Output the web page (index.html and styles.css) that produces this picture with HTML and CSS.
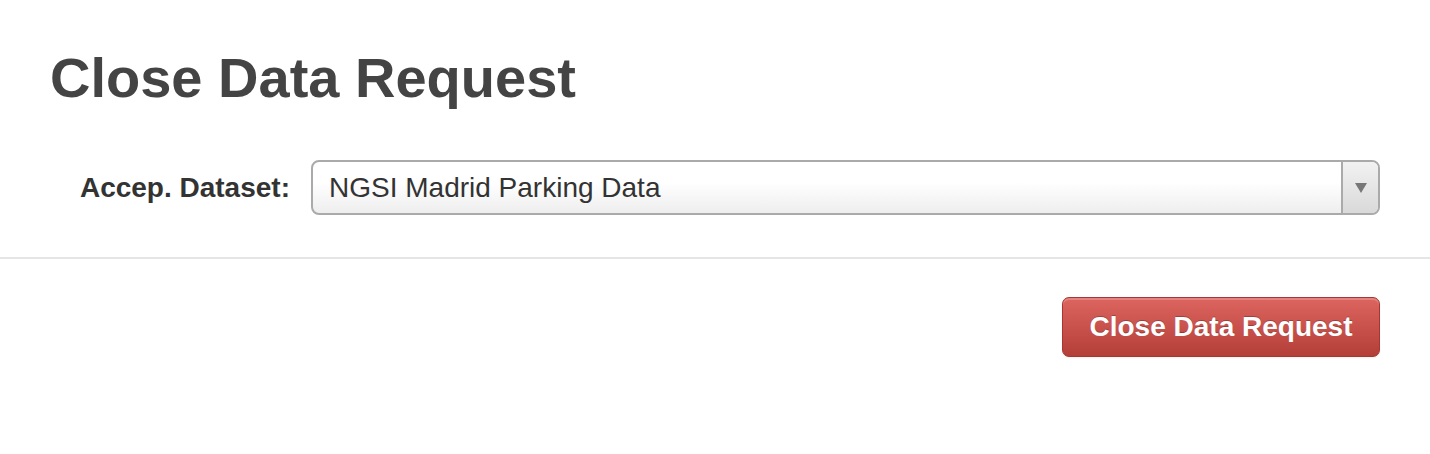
FILE: index.html
```html
<!DOCTYPE html>
<html>
<head>
<meta charset="utf-8">
<link rel="stylesheet" href="styles.css">
</head>
<body>
<div class="modal">
  <div class="modal-body">
    <h1 class="title">Close Data Request</h1>
    <div class="form-row">
      <label class="form-label">Accep. Dataset:</label>
      <div class="select">
        <span class="select-value">NGSI Madrid Parking Data</span>
        <span class="select-arrow"><svg width="12" height="10" viewBox="0 0 12 10"><polygon points="0,0 12,0 6,10" fill="#777"/></svg></span>
      </div>
    </div>
  </div>
  <div class="modal-footer">
    <button class="btn-danger">Close Data Request</button>
  </div>
</div>
</body>
</html>
```

FILE: styles.css
```css
* { box-sizing: border-box; }
html, body { margin: 0; padding: 0; background: #fff; }
body { font-family: "Liberation Sans", Arial, Helvetica, sans-serif; color: #444; }

.modal-body { padding: 46px 50px 42px 50px; border-bottom: 2px solid #e5e5e5; }
.title { margin: 0 0 50px 0; font-size: 56px; font-weight: bold; line-height: 64px; color: #444; letter-spacing: 0; }

.form-row { display: flex; align-items: center; }
.form-label { width: 240px; text-align: right; margin-right: 21px; font-size: 28px; font-weight: bold; color: #333; }

.select { flex: 1; height: 55px; display: flex; align-items: stretch; border: 2px solid #aaa; border-radius: 8px; background: linear-gradient(#fff 40%, #eee); overflow: hidden; }
.select-value { flex: 1; display: flex; align-items: center; padding-left: 16px; font-size: 28px; color: #333; }
.select-arrow { width: 37px; border-left: 2px solid #aaa; background: linear-gradient(#f2f2f2, #d9d9d9); display: flex; align-items: center; justify-content: center; }

.modal-footer { display: flex; justify-content: flex-end; padding: 38px 50px; }
.btn-danger { width: 318px; height: 60px; border: 1px solid #a8352f; border-radius: 7px; background: linear-gradient(#dd6560, #b43e38); color: #fff; font-family: "Liberation Sans", Arial, sans-serif; font-size: 28px; font-weight: bold; text-shadow: 0 -1px 0 rgba(0,0,0,0.25); box-shadow: inset 0 2px 0 rgba(255,255,255,0.2), 0 1px 2px rgba(0,0,0,0.05); padding: 0; }
```
